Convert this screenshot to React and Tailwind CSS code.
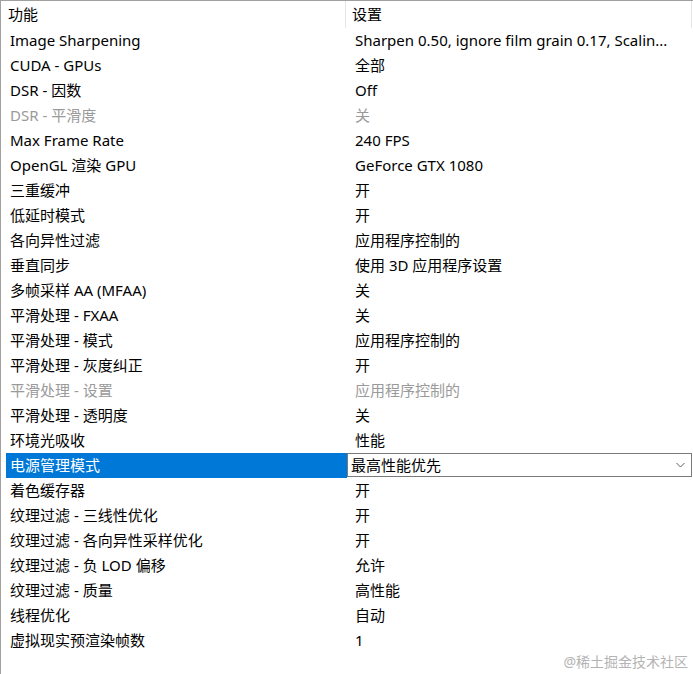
import React from "react";

const rows = [
  ["Image Sharpening", "Sharpen 0.50, ignore film grain 0.17, Scalin..."],
  ["CUDA - GPUs", "全部"],
  ["DSR - 因数", "Off"],
  ["DSR - 平滑度", "关", true],
  ["Max Frame Rate", "240 FPS"],
  ["OpenGL 渲染 GPU", "GeForce GTX 1080"],
  ["三重缓冲", "开"],
  ["低延时模式", "开"],
  ["各向异性过滤", "应用程序控制的"],
  ["垂直同步", "使用 3D 应用程序设置"],
  ["多帧采样 AA (MFAA)", "关"],
  ["平滑处理 - FXAA", "关"],
  ["平滑处理 - 模式", "应用程序控制的"],
  ["平滑处理 - 灰度纠正", "开"],
  ["平滑处理 - 设置", "应用程序控制的", true],
  ["平滑处理 - 透明度", "关"],
  ["环境光吸收", "性能"],
  ["电源管理模式", "最高性能优先", false, true],
  ["着色缓存器", "开"],
  ["纹理过滤 - 三线性优化", "开"],
  ["纹理过滤 - 各向异性采样优化", "开"],
  ["纹理过滤 - 负 LOD 偏移", "允许"],
  ["纹理过滤 - 质量", "高性能"],
  ["线程优化", "自动"],
  ["虚拟现实预渲染帧数", "1"],
];

export default function App() {
  return (
    <div
      className="relative w-[693px] h-[674px] bg-white border-t border-l border-[#a0a0a0] overflow-hidden text-[15px] leading-none text-black"
      style={{ fontFamily: '"Noto Sans", "Noto Sans CJK SC", sans-serif' }}
    >
      <div className="flex h-[27px] items-center">
        <div className="w-[345px] h-full flex items-center pl-[7px] border-r border-[#e5e5e5] my-[1px]">功能</div>
        <div className="flex-1 h-full flex items-center pl-[6px] border-r border-[#e5e5e5] mr-[1px]">设置</div>
      </div>
      {rows.map(([k, v, dis, sel]) =>
        sel ? (
          <div key={k} className="flex h-[25px]">
            <div className="ml-[5px] w-[341px] bg-[#0078d7] text-white flex items-center pl-[4px]">{k}</div>
            <div className="w-[345px] h-[24px] border border-[#7a7a7a] flex items-center pl-[3px] pr-[6px] justify-between">
              <span>{v}</span>
              <svg width="9" height="6" viewBox="0 0 9 6" fill="none">
                <path d="M0.5 1 L4.5 5 L8.5 1" stroke="#606060" strokeWidth="1" />
              </svg>
            </div>
          </div>
        ) : (
          <div key={k} className={`flex h-[25px] ${dis ? "text-[#9a9a9a]" : ""}`}>
            <div className="w-[346px] flex items-center pl-[9px]">{k}</div>
            <div className="flex-1 flex items-center pl-[8px] whitespace-nowrap">{v}</div>
          </div>
        )
      )}
      <div className="absolute right-[5px] bottom-[5px] text-[14px] text-[#b4b4b4]">@稀土掘金技术社区</div>
    </div>
  );
}
